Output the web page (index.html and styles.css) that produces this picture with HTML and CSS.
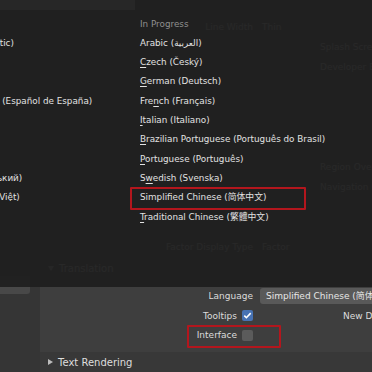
FILE: index.html
```html
<!DOCTYPE html>
<html>
<head>
    <title>Preferences - Interface</title>
    <link rel="stylesheet" href="styles.css">
</head>
<body>
    <div class="prefs">
        <div class="sidebar">
            <div class="tab"></div>
        </div>
        <div class="main">
            <div class="ghost">
                <div class="grow"><span class="lbl">Line Width</span><span class="val">Thin</span></div>
                <div class="grow"><span></span><span class="far">Splash Screen</span></div>
                <div class="grow"><span></span><span class="far">Developer Extras</span></div>
                <div class="grow"></div>
                <div class="grow"></div>
                <div class="grow"></div>
                <div class="grow"></div>
                <div class="grow"><span></span><span class="far">Region Overlap</span></div>
                <div class="grow"><span></span><span class="far">Navigation Controls</span></div>
                <div class="grow"></div>
                <div class="grow"></div>
                <div class="grow"><span class="lbl">Factor Display Type</span><span class="val">Factor</span></div>
            </div>
            <div class="panel-head">
                <span class="tri down"></span>
                <span>Translation</span>
            </div>
            <div class="panel-body">
                <div class="prow">
                    <span class="lbl">Language</span>
                    <span class="field">Simplified Chinese (简体中文)</span>
                </div>
                <div class="prow">
                    <span class="lbl">Tooltips
                        <span class="check on"><svg viewBox="0 0 11 11"><path d="M2.3 5.6l2.1 2.1 4.3-4.6"/></svg></span>
                    </span>
                    <span class="far">New Data</span>
                </div>
                <div class="prow">
                    <span class="lbl">Interface <span class="check"></span></span>
                </div>
            </div>
            <div class="panel-head closed">
                <span class="tri"></span>
                <span>Text Rendering</span>
            </div>
        </div>
    </div>

    <div class="menu">
        <div class="menu-strip"></div>
        <div class="menu-cols">
            <div class="mcol left">
                <div class="mitem mhead">Complete</div>
                <div class="mitem">Automatic (Automatic)</div>
                <div class="mitem">English (English)</div>
                <div class="mitem">Spanish (Español)</div>
                <div class="mitem">Spanish from Spain (Español de España)</div>
                <div class="mitem">Japanese (日本語)</div>
                <div class="mitem">Korean (한국어)</div>
                <div class="mitem">Russian (Русский)</div>
                <div class="mitem">Ukrainian (Український)</div>
                <div class="mitem">Vietnamese (Tiếng Việt)</div>
            </div>
            <div class="mcol">
                <div class="mitem mhead">In Progress</div>
                <div class="mitem">Arabic (العربية)</div>
                <div class="mitem"><u>C</u>zech (Český)</div>
                <div class="mitem"><u>G</u>erman (Deutsch)</div>
                <div class="mitem">Fre<u>n</u>ch (Français)</div>
                <div class="mitem"><u>I</u>talian (Italiano)</div>
                <div class="mitem"><u>B</u>razilian Portuguese (Português do Brasil)</div>
                <div class="mitem"><u>P</u>ortuguese (Português)</div>
                <div class="mitem">S<u>w</u>edish (Svenska)</div>
                <div class="mitem">Simplified Chinese (简体中文)</div>
                <div class="mitem"><u>T</u>raditional Chinese (繁體中文)</div>
            </div>
        </div>
    </div>

    <div class="mark mark-lang"></div>
    <div class="mark mark-iface"></div>
</body>
</html>
```

FILE: styles.css
```css
body { margin: 0; width: 372px; height: 372px; overflow: hidden; position: relative; background: #3d3d3d; font-family: "DejaVu Sans", "Noto Sans CJK SC", sans-serif; font-size: 9px; color: #dcdcdc; }

.prefs { display: flex; height: 372px; }
.sidebar { width: 40px; flex: none; background: #353535; padding-top: 276px; box-sizing: border-box; }
.sidebar .tab { width: 30px; height: 18px; background: #484848; border-radius: 0 0 3px 0; }

.main { flex: 1; display: flex; flex-direction: column; background: #3e3e3e; }
.ghost { height: 258px; padding-top: 17px; box-sizing: border-box; }
.grow { height: 20px; display: grid; grid-template-columns: 213px 1fr; column-gap: 9px; align-items: center; white-space: nowrap; }
.grow .lbl { text-align: right; }
.grow .far { padding-left: 58px; }

.panel-head { height: 20px; display: flex; align-items: center; gap: 5px; padding-left: 8px; font-size: 10px; }
.panel-head.closed { background: #383838; color: #dedede; }
.tri { width: 0; height: 0; border-left: 5px solid #bdbdbd; border-top: 3px solid transparent; border-bottom: 3px solid transparent; }
.tri.down { border-left: 3px solid transparent; border-right: 3px solid transparent; border-top: 5px solid #bdbdbd; border-bottom: 0; }

.panel-body { padding: 10px 0 9px; display: flex; flex-direction: column; gap: 3.5px; }
.prow { height: 16px; display: grid; grid-template-columns: 213px 1fr; column-gap: 7px; align-items: center; white-space: nowrap; }
.prow .lbl { display: flex; justify-content: flex-end; align-items: center; gap: 5px; }
.prow .far { padding-left: 83px; }
.field { height: 16px; line-height: 16px; background: #595959; color: #e6e6e6; border-radius: 3px 0 0 3px; padding-left: 6px; overflow: hidden; }

.check { width: 11px; height: 11px; flex: none; border-radius: 2px; background: #5b5b5b; }
.check.on { background: #4772b3; }
.check svg { display: block; width: 11px; height: 11px; }
.check path { fill: none; stroke: #fff; stroke-width: 1.6; }

.menu { position: absolute; top: 0; left: 0; width: 372px; height: 287px; background: rgba(31, 31, 31, 0.955); overflow: hidden; font-size: 8.8px; }
.menu-strip { width: 135px; height: 10px; background: rgba(255, 255, 255, 0.035); }
.menu-cols { display: flex; padding-top: 4.5px; }
.mcol { display: flex; flex-direction: column; }
.mcol.left { margin-left: -86px; width: 226px; flex: none; }
.mitem { height: 19.33px; line-height: 19.33px; white-space: nowrap; color: #e2e2e2; }
.mhead { color: #8f8f8f; }
.mitem u { text-decoration-thickness: 1px; text-underline-offset: 2px; }

.mark { position: absolute; border: 2px solid #b3161d; border-radius: 1px; box-sizing: border-box; }
.mark-lang { left: 130px; top: 187px; width: 176px; height: 23px; }
.mark-iface { left: 187px; top: 325px; width: 94px; height: 23px; }
```
